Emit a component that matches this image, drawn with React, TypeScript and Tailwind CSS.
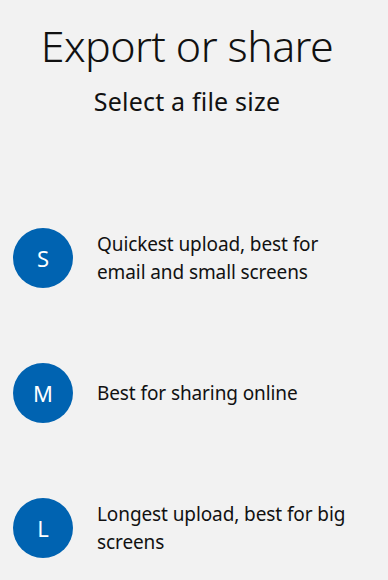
import React from 'react';

const sizes = [
  { id: 'S', label: 'Quickest upload, best for email and small screens' },
  { id: 'M', label: 'Best for sharing online' },
  { id: 'L', label: 'Longest upload, best for big screens' },
];

const App: React.FC = () => {
  return (
    <div
      className="w-[388px] h-[580px] overflow-hidden bg-[#f2f2f2] text-[#111]"
      style={{ fontFamily: '"Noto Sans", "Open Sans", sans-serif' }}
    >
      {/* Header */}
      <div className="pt-[20px] pr-[14px] text-center">
        <h1 className="text-[43px] font-light leading-[52px] tracking-[-0.6px]">Export or share</h1>
        <p className="mt-[15px] text-[25px] leading-[28px] tracking-[0.2px]">Select a file size</p>
      </div>

      {/* Size options */}
      <ul className="mt-[113px] flex flex-col gap-[75px] pl-[13px]">
        {sizes.map((size) => (
          <li key={size.id} className="flex items-center gap-[24px]">
            <div className="w-[60px] h-[60px] shrink-0 rounded-full bg-[#0063b1] flex items-center justify-center text-white text-[22px]">
              {size.id}
            </div>
            <span className="w-[262px] text-[19px] leading-[28px] tracking-[-0.1px]">{size.label}</span>
          </li>
        ))}
      </ul>
    </div>
  );
};

export default App;
